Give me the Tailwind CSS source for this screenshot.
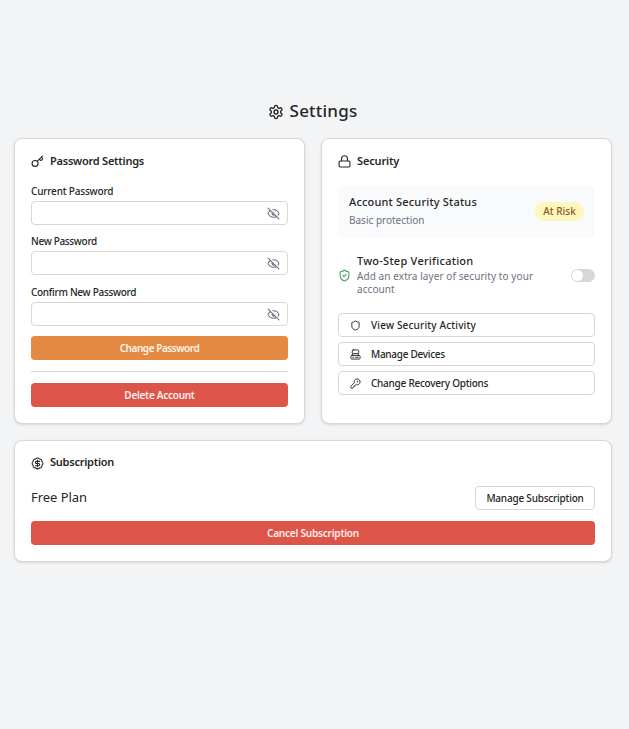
<!DOCTYPE html>
<html lang="en">
<head>
<meta charset="utf-8">
<title>Settings</title>
<script src="https://cdn.jsdelivr.net/npm/@tailwindcss/browser@4"></script>
</head>
<body class="h-[729px] overflow-hidden bg-[#f3f4f6] pt-[100px] pr-[17px] pl-[14px] font-['Noto_Sans',sans-serif] text-[10px] text-[#262626]">
<header class="flex h-[22px] items-center justify-center gap-1.5 pr-px">
  <svg class="mt-px size-4" viewBox="0 0 24 24" fill="none" stroke="currentColor" stroke-width="2" stroke-linecap="round" stroke-linejoin="round"><path d="M12.220 2h-.44a2 2 0 0 0-2 2v.18a2 2 0 0 1-1 1.730l-.43.25a2 2 0 0 1-2 0l-.15-.08a2 2 0 0 0-2.730.73l-.22.38a2 2 0 0 0 .73 2.730l.15.1a2 2 0 0 1 1 1.720v.51a2 2 0 0 1-1 1.740l-.15.09a2 2 0 0 0-.73 2.730l.22.38a2 2 0 0 0 2.730.73l.15-.08a2 2 0 0 1 2 0l.43.25a2 2 0 0 1 1 1.730V20a2 2 0 0 0 2 2h.44a2 2 0 0 0 2-2v-.18a2 2 0 0 1 1-1.730l.43-.25a2 2 0 0 1 2 0l.15.08a2 2 0 0 0 2.730-.73l.22-.39a2 2 0 0 0-.73-2.730l-.15-.08a2 2 0 0 1-1-1.740v-.5a2 2 0 0 1 1-1.740l.15-.09a2 2 0 0 0 .73-2.730l-.22-.38a2 2 0 0 0-2.730-.73l-.15.08a2 2 0 0 1-2 0l-.43-.25a2 2 0 0 1-1-1.730V4a2 2 0 0 0-2-2z"/><circle cx="12" cy="12" r="3"/></svg>
  <h1 class="text-[17px] font-medium tracking-[0.2px]">Settings</h1>
</header>
<main class="mt-4 grid grid-cols-2 gap-4 leading-[13px]">
  <section class="h-[286px] rounded-lg border border-[#dad7d5] bg-white px-4 pt-4 shadow-sm">
    <h2 class="flex h-[13px] items-center gap-1.5 text-[11px] font-semibold"><svg class="size-[13px]" viewBox="0 0 24 24" fill="none" stroke="currentColor" stroke-width="2" stroke-linecap="round" stroke-linejoin="round"><circle cx="7.500" cy="15.500" r="5.500"/><path d="m21 2-9.600 9.600M15.500 7.500l2.300 2.300a1 1 0 0 0 1.400 0l2.100-2.100a1 1 0 0 0 0-1.400L19 4"/></svg><span class="pb-0.5 tracking-[-0.24px]">Password Settings</span></h2>
    <div class="mt-[17px] flex flex-col">
      <div><label class="mb-[3px] block h-[13px] font-medium tracking-[-0.19px]">Current Password</label><div class="flex h-6 items-center justify-end rounded-sm border border-[#d9d6d3] pr-[7px] text-[#6b7280]"><svg class="size-[13px]" viewBox="0 0 24 24" fill="none" stroke="currentColor" stroke-width="2" stroke-linecap="round"><path d="M10.700 5.100A10.700 10.700 0 0 1 21.900 11.700a1 1 0 0 1 0 .7 10.700 10.700 0 0 1-1.400 2.500M14.100 14.200a3 3 0 0 1-4.200-4.200M17.500 17.500A10.700 10.700 0 0 1 2.100 12.300a1 1 0 0 1 0-.7 10.700 10.700 0 0 1 4.400-5.100M2 2l20 20"/></svg></div></div>
      <div class="mt-[10px]"><label class="mb-[3px] block h-[13px] font-medium tracking-[-0.33px]">New Password</label><div class="flex h-6 items-center justify-end rounded-sm border border-[#d9d6d3] pr-[7px] text-[#6b7280]"><svg class="size-[13px]" viewBox="0 0 24 24" fill="none" stroke="currentColor" stroke-width="2" stroke-linecap="round"><path d="M10.700 5.100A10.700 10.700 0 0 1 21.900 11.700a1 1 0 0 1 0 .7 10.700 10.700 0 0 1-1.400 2.500M14.100 14.200a3 3 0 0 1-4.200-4.200M17.500 17.500A10.700 10.700 0 0 1 2.100 12.300a1 1 0 0 1 0-.7 10.700 10.700 0 0 1 4.400-5.100M2 2l20 20"/></svg></div></div>
      <div class="mt-[11px]"><label class="mb-[3px] block h-[13px] font-medium tracking-[-0.3px]">Confirm New Password</label><div class="flex h-6 items-center justify-end rounded-sm border border-[#d9d6d3] pr-[7px] text-[#6b7280]"><svg class="size-[13px]" viewBox="0 0 24 24" fill="none" stroke="currentColor" stroke-width="2" stroke-linecap="round"><path d="M10.700 5.100A10.700 10.700 0 0 1 21.900 11.700a1 1 0 0 1 0 .7 10.700 10.700 0 0 1-1.400 2.500M14.100 14.200a3 3 0 0 1-4.200-4.200M17.500 17.500A10.700 10.700 0 0 1 2.100 12.300a1 1 0 0 1 0-.7 10.700 10.700 0 0 1 4.400-5.100M2 2l20 20"/></svg></div></div>
    </div>
    <button class="mt-[10px] block h-6 w-full rounded-sm bg-[#e48941] font-semibold tracking-[-0.45px] text-[#fff5eb]">Change Password</button>
    <hr class="mt-[11px] border-[#d9d6d3]">
    <button class="mt-[11px] block h-6 w-full rounded-sm bg-[#dd5448] font-semibold tracking-[-0.27px] text-[#fff0ee]">Delete Account</button>
  </section>
  <section class="h-[286px] rounded-lg border border-[#dad7d5] bg-white px-4 pt-4 shadow-sm">
    <h2 class="flex h-[13px] items-center gap-1.5 text-[11px] font-semibold"><svg class="size-[13px]" viewBox="0 0 24 24" fill="none" stroke="currentColor" stroke-width="2" stroke-linejoin="round"><rect x="2" y="11" width="20" height="11" rx="2"/><path d="M6.500 11V7a5.500 5.500 0 0 1 11 0v4"/></svg><span class="pb-0.5 tracking-[-0.15px]">Security</span></h2>
    <div class="mt-[17px] flex h-[53px] items-center justify-between rounded-md bg-[#f9fafb] pr-[11px] pl-[11px]">
      <div class="pb-px"><p class="text-[11px] leading-[14px] font-medium tracking-[0.18px]">Account Security Status</p><p class="mt-[5px] h-[14px] text-[#6b7280]">Basic protection</p></div>
      <div class="flex h-[19px] w-[49px] items-center justify-center rounded-full bg-[#fef6bf] font-medium text-[#8a5a20]">At Risk</div>
    </div>
    <div class="mt-[16px] flex h-[43px] items-center">
      <svg class="size-[13px] shrink-0 text-[#43a35c]" viewBox="0 0 24 24" fill="none" stroke="currentColor" stroke-width="2" stroke-linecap="round" stroke-linejoin="round"><path d="M20 13c0 5-3.500 7.500-7.700 9a1 1 0 0 1-.7 0C7.500 20.500 4 18 4 13V6a1 1 0 0 1 1-1c2 0 4.500-1.200 6.200-2.700a1.200 1.200 0 0 1 1.500 0C14.500 3.800 17 5 19 5a1 1 0 0 1 1 1zM9 12l2 2 4-4"/></svg>
      <div class="ml-1.5 h-[43px] flex-1 whitespace-nowrap"><p class="mb-0.5 text-[11px] leading-[14px] font-medium tracking-[0.25px]">Two-Step Verification</p><p class="tracking-[0.08px] text-[#6b7280]">Add an extra layer of security to your<br>account</p></div>
      <div class="h-[13px] w-6 shrink-0 rounded-full bg-[#dad6d3] p-px"><div class="size-[11px] rounded-full bg-white"></div></div>
    </div>
    <div class="mt-4 flex flex-col gap-[5px] font-medium">
      <button class="flex h-6 items-center gap-[10px] rounded-sm border border-[#d9d6d3] pl-[11px]"><svg class="size-[11px]" viewBox="0 0 24 24" fill="none" stroke="currentColor" stroke-width="2" stroke-linejoin="round"><path d="M20 13c0 5-3.500 7.500-7.700 9a1 1 0 0 1-.7 0C7.500 20.500 4 18 4 13V6a1 1 0 0 1 1-1c2 0 4.500-1.200 6.200-2.700a1.200 1.200 0 0 1 1.500 0C14.500 3.800 17 5 19 5a1 1 0 0 1 1 1z"/></svg><span class="tracking-[0.17px]">View Security Activity</span></button>
      <button class="flex h-6 items-center gap-[10px] rounded-sm border border-[#d9d6d3] pl-[11px]"><svg class="size-[11px]" viewBox="0 0 24 24" fill="none" stroke="currentColor" stroke-width="2" stroke-linecap="round" stroke-linejoin="round"><rect x="5" y="2" width="14" height="8" rx="2"/><rect x="2" y="14" width="20" height="8" rx="2"/><path d="M6 18h2M12 18h6M6 10v4M18 10v4"/></svg><span class="tracking-[-0.28px]">Manage Devices</span></button>
      <button class="flex h-6 items-center gap-[10px] rounded-sm border border-[#d9d6d3] pl-[11px]"><svg class="size-[11px]" viewBox="0 0 24 24" fill="none" stroke="currentColor" stroke-width="2" stroke-linejoin="round"><path d="M2.600 17.400A2 2 0 0 0 2 18.800V21a1 1 0 0 0 1 1h3a1 1 0 0 0 1-1v-1a1 1 0 0 1 1-1h1a1 1 0 0 0 1-1v-1a1 1 0 0 1 1-1h.2a2 2 0 0 0 1.400-.6l.8-.8a6.500 6.500 0 1 0-4-4z"/><circle cx="16.500" cy="7.500" r="1"/></svg><span class="tracking-[-0.25px]">Change Recovery Options</span></button>
    </div>
  </section>
  <section class="col-span-2 h-[122px] rounded-lg border border-[#dad7d5] bg-white px-4 pt-[15px] shadow-sm">
    <h2 class="flex h-[14px] items-center gap-1.5 text-[11px] font-semibold"><svg class="size-[13px]" viewBox="0 0 24 24" fill="none" stroke="currentColor" stroke-width="2" stroke-linecap="round" stroke-linejoin="round"><path d="M3.900 8.600a4 4 0 0 1 4.800-4.800 4 4 0 0 1 6.700 0 4 4 0 0 1 4.800 4.800 4 4 0 0 1 0 6.700 4 4 0 0 1-4.800 4.800 4 4 0 0 1-6.700 0 4 4 0 0 1-4.800-4.800 4 4 0 0 1 0-6.700z"/><path d="M16 8h-6a2 2 0 1 0 0 4h4a2 2 0 1 1 0 4H8M12 18V6"/></svg><span class="pb-[3px] tracking-[-0.25px]">Subscription</span></h2>
    <div class="mt-4 flex h-6 items-center justify-between"><p class="pb-px text-[13px] tracking-[-0.05px]">Free Plan</p><button class="h-6 w-[120px] rounded-sm border border-[#d9d6d3] font-medium tracking-[-0.21px]">Manage Subscription</button></div>
    <button class="mt-[11px] block h-6 w-full rounded-sm bg-[#dd5448] font-semibold tracking-[-0.2px] text-[#fff0ee]">Cancel Subscription</button>
  </section>
</main>
</body>
</html>
